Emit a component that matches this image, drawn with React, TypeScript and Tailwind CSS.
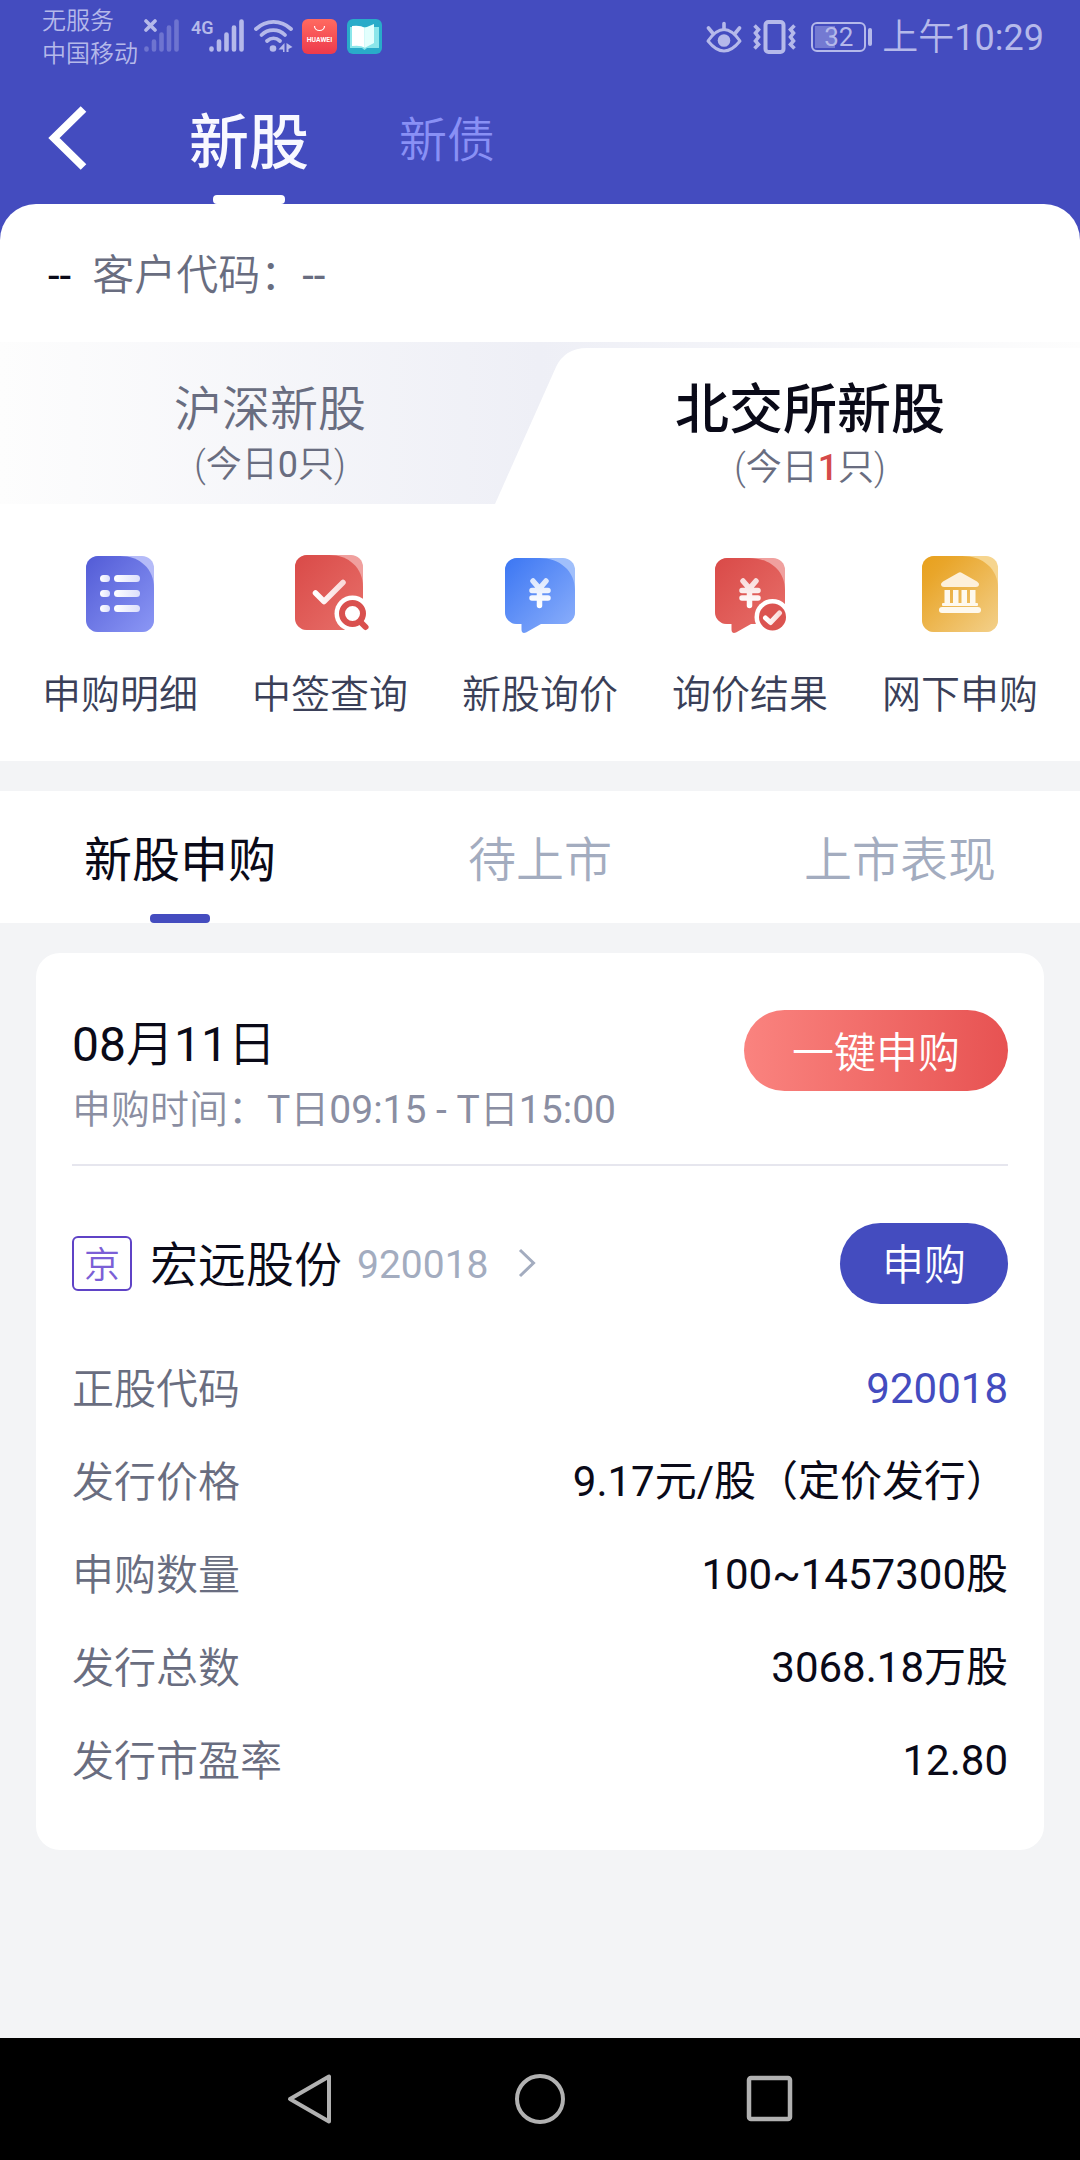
import React, { useState } from 'react';

const detailRows = [
  { label: '正股代码', value: '920018', link: true },
  { label: '发行价格', value: '9.17元/股（定价发行）' },
  { label: '申购数量', value: '100~1457300股' },
  { label: '发行总数', value: '3068.18万股' },
  { label: '发行市盈率', value: '12.80' },
];

const subTabs = ['新股申购', '待上市', '上市表现'];

function SignalBars() {
  return (
    <g stroke="currentColor" strokeWidth="4.6" strokeLinecap="round">
      <path d="M2.5 30.5v-1M10 30.5v-8M17.5 30.5v-15M25 30.5v-22M32.5 30.5v-28" />
    </g>
  );
}

function StatusBar() {
  return (
    <div className="flex h-[72px] items-start justify-between pl-[42px] pr-9 text-[#b5b9ea]">
      <div className="flex items-start">
        <div className="w-[102px] whitespace-nowrap pt-[5px] text-2xl font-[350] leading-[33px]">
          <div>无服务</div>
          <div>中国移动</div>
        </div>

        <svg className="mt-[19px]" width="35" height="34" viewBox="0 0 35 34" fill="none">
          <g className="text-[#6e74d0]">
            <SignalBars />
          </g>
          <rect width="15" height="15" fill="#444cbf" />
          <path d="M2 2l9 9M11 2l-9 9" stroke="currentColor" strokeWidth="3.6" strokeLinecap="round" />
        </svg>

        <svg className="ml-3 mt-[13px]" width="54" height="40" viewBox="0 -6 54 40" fill="none">
          <g transform="translate(18 0)">
            <SignalBars />
          </g>
          <rect width="32" height="17" fill="#444cbf" />
          <text x="0" y="15" fill="currentColor" fontSize="18" fontWeight="600">4G</text>
        </svg>

        <svg className="ml-[9px] mt-[19px]" width="40" height="34" viewBox="0 0 40 34" fill="none">
          <g stroke="currentColor" strokeWidth="3.8" strokeLinecap="round">
            <path d="M2 10C12 .5 27 .5 37 10" />
            <path d="M7.500 16c6.500-6.500 17-6.500 23.500 0" />
            <path d="M13 22c4-3.600 9-3.600 13 0" />
          </g>
          <circle cx="19" cy="29.500" r="3.300" fill="currentColor" />
          <path d="M30.500 24v9h-1.500v-2.500h-4.500zM32.500 24l6 4-4 2v3h-2z" fill="currentColor" />
        </svg>

        <svg className="ml-2 mt-[19px]" width="36" height="36" viewBox="0 0 36 36">
          <defs>
            <linearGradient id="huawei" x1="0" y1="0" x2="0" y2="1">
              <stop offset="0" stopColor="#ff6a60" />
              <stop offset="1" stopColor="#ee3a4c" />
            </linearGradient>
          </defs>
          <rect width="35" height="35" rx="6" fill="url(#huawei)" />
          <path d="M12.500 7c0 6 10 6 10 0" fill="none" stroke="#fff" strokeWidth="1.200" />
          <text x="17.500" y="23" fill="#fff" fontSize="6.800" fontWeight="700" textAnchor="middle">HUAWEI</text>
        </svg>

        <svg className="ml-[9px] mt-[19px]" width="36" height="36" viewBox="0 0 36 36">
          <rect width="35" height="35" rx="6" fill="#29abc9" />
          <path d="M3 8h29v21H20l-2.500 2-2.500-2H3z" fill="#8be6ea" />
          <path d="M5 7q9-1 12.500 2v19.500Q14 26 5 27z" fill="#fff" />
          <path d="M17.500 9L27 5v19l-9.500 5z" fill="#e2fffd" />
        </svg>
      </div>

      <div className="flex h-[72px] items-center pt-0.5">
        <svg width="36" height="36" viewBox="0 0 36 36" fill="none">
          <g stroke="currentColor" strokeWidth="3.600" strokeLinecap="round" strokeLinejoin="round">
            <path d="M2 22Q18-1 34 22Q18 42 2 22z" strokeWidth="3" />
            <path d="M18 4.500v6M2.500 9l4.500 5.500M33.500 9L29 14.500" />
          </g>
          <circle cx="18" cy="21.500" r="6.300" fill="currentColor" />
        </svg>
        <svg className="ml-[11px]" width="43" height="36" viewBox="0 0 43 36" fill="none" stroke="currentColor">
          <rect x="12.500" y="3" width="18" height="30" rx="3" strokeWidth="4" />
          <path d="M1.500 6.500l4 4-3 3.500 3 4-3 4 3 3.500-4 4M41.500 6.500l-4 4 3 3.500-3 4 3 4-3 3.500 4 4" strokeWidth="3.600" />
        </svg>
        <div className="ml-[15px] flex items-center">
          <div className="relative flex h-[30px] w-[55px] items-center justify-center rounded-md border-2 border-current">
            <span className="absolute bottom-0.5 left-0.5 top-0.5 w-5 bg-[#747ad2]" />
            <span className="relative text-[26px] leading-none">32</span>
          </div>
          <span className="ml-0.5 h-[18px] w-1 rounded-sm bg-current" />
        </div>
        <span className="ml-2.5 pt-0.5 text-4xl leading-none"><span className="font-[350]">上午</span>10:29</span>
      </div>
    </div>
  );
}

function DetailIcon() {
  return (
    <svg width="90" height="90" viewBox="0 0 90 90">
      <defs>
        <linearGradient id="violet" x1="0" y1="0" x2="1" y2="1">
          <stop offset="0" stopColor="#525bd6" />
          <stop offset="1" stopColor="#8b97f5" />
        </linearGradient>
        <linearGradient id="bar" x1="0" y1="0" x2="1" y2="0">
          <stop offset="0" stopColor="#fff" />
          <stop offset="1" stopColor="#dcdffb" />
        </linearGradient>
      </defs>
      <rect x="11" y="7" width="68" height="76" rx="12" fill="#b5bbf8" />
      <path d="M23 7h22c20 0 34 13 34 32v32a12 12 0 0 1-12 12H23a12 12 0 0 1-12-12V19A12 12 0 0 1 23 7z" fill="url(#violet)" />
      {[26, 41, 56].map((y) => (
        <g key={y} fill="url(#bar)">
          <rect x="25" y={y} width="10" height="7" rx="3.500" />
          <rect x="39" y={y} width="26" height="7" rx="3.500" />
        </g>
      ))}
    </svg>
  );
}

function LotteryIcon() {
  return (
    <svg width="90" height="90" viewBox="0 0 90 90" fill="none">
      <defs>
        <linearGradient id="red" x1="0" y1="0" x2="1" y2="1">
          <stop offset="0" stopColor="#d94a48" />
          <stop offset="1" stopColor="#e8706a" />
        </linearGradient>
        <linearGradient id="tick" x1="0" y1="0" x2="1" y2="0">
          <stop offset="0" stopColor="#fff" />
          <stop offset="1" stopColor="#fadbda" />
        </linearGradient>
      </defs>
      <rect x="10" y="6" width="68" height="75" rx="12" fill="#f0a09e" />
      <path d="M22 6h22c20 0 34 13 34 32v31a12 12 0 0 1-12 12H22a12 12 0 0 1-12-12V18A12 12 0 0 1 22 6z" fill="url(#red)" />
      <path d="M30.500 44l8.500 8.500L58 33.500" stroke="url(#tick)" strokeWidth="5.500" strokeLinecap="round" strokeLinejoin="round" />
      <circle cx="67.500" cy="64.500" r="18" fill="#fff" />
      <path d="M60 76h20v12H60z" fill="#fff" />
      <path d="M76 73.500l4.500 4.500" stroke="#d9504e" strokeWidth="6" strokeLinecap="round" />
      <circle cx="67.500" cy="64.500" r="10.500" stroke="#d9504e" strokeWidth="6" />
    </svg>
  );
}

function YenBubble({ fill, corner }: { fill: string; corner: string }) {
  return (
    <>
      <rect x="10" y="9" width="70" height="66" rx="12" fill={corner} />
      <path d="M22 9h22c21 0 36 13 36 32v22a12 12 0 0 1-12 12H46l-15 8.500q-4.500 1.500-4.500-3V75H22a12 12 0 0 1-12-12V21A12 12 0 0 1 22 9z" fill={fill} />
      <g stroke="url(#yen)" strokeWidth="5.500" strokeLinecap="round" fill="none">
        <path d="M38 32l6.500 7.500L51 32M37 41.500h16M37 49h16M44.500 39.500V56.500" />
      </g>
    </>
  );
}

function InquiryIcon() {
  return (
    <svg width="90" height="90" viewBox="0 0 90 90">
      <defs>
        <linearGradient id="blue" x1="0" y1="0" x2="1" y2="1">
          <stop offset="0" stopColor="#3b76f3" />
          <stop offset="1" stopColor="#8db0fb" />
        </linearGradient>
        <linearGradient id="yen" x1="0" y1="0" x2="0" y2="1">
          <stop offset="0" stopColor="#fff" stopOpacity=".8" />
          <stop offset="1" stopColor="#fff" />
        </linearGradient>
      </defs>
      <YenBubble fill="url(#blue)" corner="#a0bffb" />
    </svg>
  );
}

function ResultIcon() {
  return (
    <svg width="90" height="90" viewBox="0 0 90 90" fill="none">
      <YenBubble fill="url(#red)" corner="#f0a09e" />
      <circle cx="67.500" cy="68" r="18" fill="#fff" />
      <circle cx="67.500" cy="68" r="13.500" fill="#db5350" />
      <path d="M60.500 69l5 4.500 9-9.500" stroke="url(#tick)" strokeWidth="5" strokeLinecap="round" strokeLinejoin="round" />
    </svg>
  );
}

function OfflineIcon() {
  return (
    <svg width="90" height="90" viewBox="0 0 90 90">
      <defs>
        <linearGradient id="gold" x1="0" y1="0" x2="1" y2="1">
          <stop offset="0" stopColor="#e8a01c" />
          <stop offset=".2" stopColor="#e9a62b" />
          <stop offset="1" stopColor="#f3d08a" />
        </linearGradient>
      </defs>
      <rect x="7" y="7" width="76" height="76" rx="12" fill="#f6d58f" />
      <path d="M19 7h28c21 0 36 13 36 32v32a12 12 0 0 1-12 12H19A12 12 0 0 1 7 71V19A12 12 0 0 1 19 7z" fill="url(#gold)" />
      <g fill="#fef9ee">
        <path d="M43 24q2-1.500 4 0l15 8.500q2.500 1.500 2 3.500t-3 2H29q-2.500 0-3-2t2-3.500z" fill="#fdf0da" />
        <path d="M29.500 41h5.500v13h-5.500zM38 41h5.500v13H38zM46.500 41H52v13h-5.500zM55 41h5.500v13H55z" />
        <rect x="27" y="54" width="36" height="3" rx="1" />
        <rect x="24" y="58" width="42" height="6" rx="3" />
      </g>
    </svg>
  );
}

const shortcuts = [
  { label: '申购明细', Icon: DetailIcon },
  { label: '中签查询', Icon: LotteryIcon },
  { label: '新股询价', Icon: InquiryIcon },
  { label: '询价结果', Icon: ResultIcon },
  { label: '网下申购', Icon: OfflineIcon },
];

function App() {
  const [activeTab, setActiveTab] = useState(subTabs[0]);

  return (
    <div className="flex min-h-screen flex-col bg-[#f3f4f6] font-['Roboto','Noto_Sans_CJK_SC',sans-serif] text-[#0a0a18]">
      <div className="bg-[#444cbf]">
        <StatusBar />

        {/* Title bar */}
        <header className="flex h-[132px] items-stretch">
          <button type="button" aria-label="返回" className="flex w-[189px] items-center pl-12">
            <svg width="40" height="64" viewBox="0 0 40 64" fill="none" className="text-white">
              <path d="M35.500 3L6 32l29.500 29" stroke="currentColor" strokeWidth="8" />
            </svg>
          </button>
          <button type="button" className="flex flex-col items-center text-[60px] font-medium leading-[60px] text-[#f8f8ff]">
            <span className="pt-[42px]">新股</span>
            <span className="mt-auto h-[9px] w-[72px] rounded-[4px] bg-white" />
          </button>
          <button type="button" className="ml-[90px] pt-1.5 text-5xl font-[350] text-[#8990f5]">新债</button>
        </header>

        <div className="flex h-[138px] items-center gap-[21px] rounded-t-[36px] bg-white px-12 pt-1.5 text-[42px] leading-none">
          <span>--</span>
          <span className="text-[#696d80]"><span className="font-[350]">客户代码：</span>--</span>
        </div>
      </div>

      {/* Market switch */}
      <div className="relative grid h-[162px] grid-cols-2 bg-linear-to-r from-[#fdfdfd] via-[#eeeff6] to-[#fdfdfd] text-[#696d80]">
        <svg className="absolute right-0 top-1.5 h-[156px] w-[585px]" viewBox="0 0 585 156" preserveAspectRatio="none">
          <path d="M0 156L61 19Q70 0 92 0H585V156z" fill="#fff" />
        </svg>
        <button type="button" className="relative flex flex-col items-center pt-[39px]">
          <span className="text-5xl font-[350] leading-[57px]">沪深新股</span>
          <span className="text-4xl leading-[54px]">
            <span className="font-[350]">(今日</span>0<span className="font-[350]">只)</span>
          </span>
        </button>
        <button type="button" className="relative flex flex-col items-center pt-[39px]">
          <span className="text-[54px] font-medium leading-[60px] text-[#0a0a18]">北交所新股</span>
          <span className="text-4xl leading-[54px]">
            <span className="font-[350]">(今日</span>
            <span className="font-medium text-[#d54a4a]">1</span>
            <span className="font-[350]">只)</span>
          </span>
        </button>
      </div>

      {/* Shortcuts */}
      <nav className="grid grid-cols-5 bg-white px-[15px] pb-9 pt-[45px]">
        {shortcuts.map(({ label, Icon }) => (
          <button key={label} type="button" className="flex flex-col items-center text-[39px] font-[350] leading-[60px] text-[#3a3f58]">
            <Icon />
            <span className="mt-[26px] whitespace-nowrap">{label}</span>
          </button>
        ))}
      </nav>

      <div className="mt-[30px] grid h-[132px] grid-cols-3 bg-white">
        {subTabs.map((tab) => (
          <button
            key={tab}
            type="button"
            onClick={() => setActiveTab(tab)}
            className={`flex flex-col items-center text-5xl leading-[60px] ${tab === activeTab ? 'font-normal text-[#0a0a18]' : 'font-[350] text-[#a3acbf]'}`}
          >
            <span className="pt-10">{tab}</span>
            {tab === activeTab && <span className="mt-auto h-[9px] w-[60px] rounded-[4px] bg-[#444cbf]" />}
          </button>
        ))}
      </div>

      {/* Subscription card */}
      <main className="px-9 pt-[30px]">
        <section className="rounded-3xl bg-white px-9 pb-[43px]">
          <div className="flex h-[213px] items-start justify-between border-b-2 border-[#e6e6ee] pt-[57px]">
            <div>
              <h2 className="text-5xl leading-[69px]">08<span className="font-[350]">月</span>11<span className="font-[350]">日</span></h2>
              <p className="text-[39px] leading-[62px] text-[#8a8ea2]">
                <span className="font-[350]">申购时间：</span>T<span className="font-[350]">日</span>09:15 - T<span className="font-[350]">日</span>15:00
              </p>
            </div>
            <button type="button" className="h-[81px] w-[264px] rounded-full bg-linear-to-r from-[#fa837f] to-[#e75252] pt-1.5 text-[42px] font-[350] leading-none text-white">
              一键申购
            </button>
          </div>

          <div className="flex h-44 items-center justify-between pt-[18px]">
            <a href="#920018" className="flex items-center">
              <span className="flex h-[55px] w-[60px] items-center justify-center rounded-md border-2 border-[#5f43c6] pt-1.5 text-4xl font-[350] leading-none text-[#7b5fd6]">京</span>
              <span className="ml-[18px] pt-1.5 text-5xl font-[350] leading-[60px]">宏远股份</span>
              <span className="ml-[15px] pt-1 text-[39px] leading-[60px] text-[#a3acbf]">920018</span>
              <svg className="ml-7" width="20" height="30" viewBox="0 0 20 30" fill="none">
                <path d="M3 2l13.500 13L3 28" stroke="#a3acbf" strokeWidth="3" />
              </svg>
            </a>
            <button type="button" className="h-[81px] w-[168px] rounded-full bg-[#444cbf] pt-1.5 text-[42px] font-[350] leading-none text-white">
              申购
            </button>
          </div>

          <dl className="text-[42px]">
            {detailRows.map((row) => (
              <div key={row.label} className="flex h-[93px] items-center justify-between leading-[60px]">
                <dt className="pt-0.5 font-[350] text-[#696d80]">{row.label}</dt>
                <dd className={row.link ? 'text-[#444cbf]' : ''}>{row.value}</dd>
              </div>
            ))}
          </dl>
        </section>
      </main>

      {/* System navigation */}
      <footer className="mt-auto flex h-[122px] items-center justify-center gap-[178px] bg-black text-[#b1b1b1]">
        <button type="button" aria-label="返回键">
          <svg width="52" height="52" viewBox="0 0 52 52" fill="none" stroke="currentColor" strokeWidth="4" strokeLinejoin="round">
            <path d="M45 3.500v45L6 26z" />
          </svg>
        </button>
        <button type="button" aria-label="主页">
          <svg width="52" height="52" viewBox="0 0 52 52" fill="none" stroke="currentColor" strokeWidth="4">
            <circle cx="26" cy="26" r="23" />
          </svg>
        </button>
        <button type="button" aria-label="最近任务">
          <svg width="52" height="52" viewBox="0 0 52 52" fill="none" stroke="currentColor" strokeWidth="4.500">
            <rect x="5" y="5" width="41" height="41" rx="2" />
          </svg>
        </button>
      </footer>
    </div>
  );
}

export default App;
